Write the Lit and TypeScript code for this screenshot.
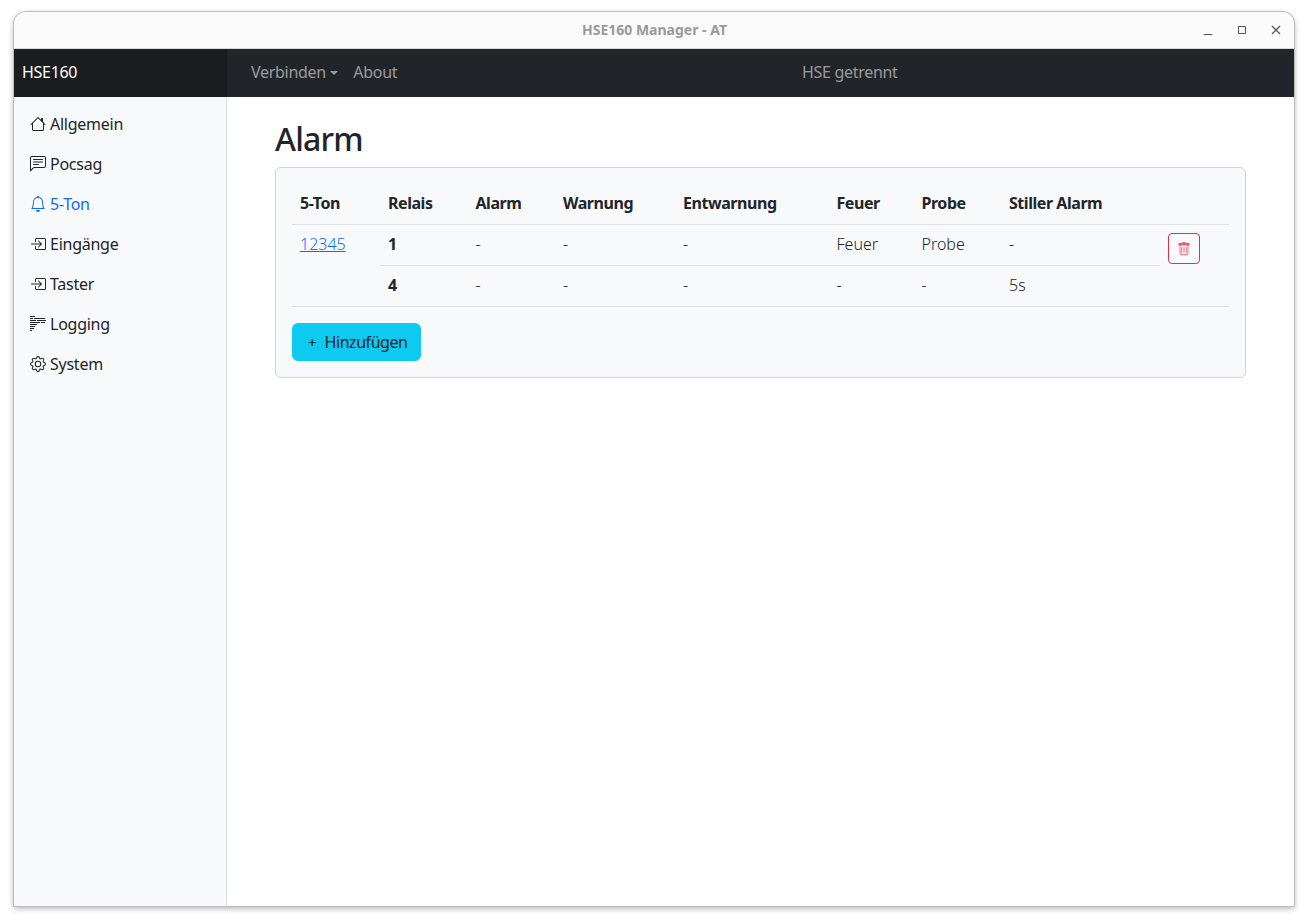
import { LitElement, css, html, svg } from "lit";
import { customElement } from "lit/decorators.js";

const icons = {
  house: svg`<path d="M8.707 1.5a1 1 0 0 0-1.414 0L.646 8.146a.5.5 0 0 0 .708.708L2 8.207V13.5A1.5 1.5 0 0 0 3.5 15h9a1.5 1.5 0 0 0 1.5-1.5V8.207l.646.647a.5.5 0 0 0 .708-.708L13 5.793V2.5a.5.5 0 0 0-.5-.5h-1a.5.5 0 0 0-.5.5v1.293L8.707 1.5ZM13 7.207V13.5a.5.5 0 0 1-.5.5h-9a.5.5 0 0 1-.5-.5V7.207l5-5 5 5Z"/>`,
  chat: svg`<path d="M14 1a1 1 0 0 1 1 1v8a1 1 0 0 1-1 1H4.414A2 2 0 0 0 3 11.586l-2 2V2a1 1 0 0 1 1-1h12zM2 0a2 2 0 0 0-2 2v12.793a.5.5 0 0 0 .854.353l2.853-2.853A1 1 0 0 1 4.414 12H14a2 2 0 0 0 2-2V2a2 2 0 0 0-2-2H2z"/><path d="M3 3.5a.5.5 0 0 1 .5-.5h9a.5.5 0 0 1 0 1h-9a.5.5 0 0 1-.5-.5zM3 6a.5.5 0 0 1 .5-.5h9a.5.5 0 0 1 0 1h-9A.5.5 0 0 1 3 6zm0 2.5a.5.5 0 0 1 .5-.5h5a.5.5 0 0 1 0 1h-5a.5.5 0 0 1-.5-.5z"/>`,
  bell: svg`<path d="M8 16a2 2 0 0 0 2-2H6a2 2 0 0 0 2 2zM8 1.918l-.797.161A4.002 4.002 0 0 0 4 6c0 .628-.134 2.197-.459 3.742-.16.767-.376 1.566-.663 2.258h10.244c-.287-.692-.502-1.49-.663-2.258C12.134 8.197 12 6.628 12 6a4.002 4.002 0 0 0-3.203-3.92L8 1.917zM14.22 12c.223.447.481.801.78 1H1c.299-.199.557-.553.78-1C2.68 10.2 3 6.88 3 6c0-2.42 1.72-4.44 4.005-4.901a1 1 0 1 1 1.99 0A5.002 5.002 0 0 1 13 6c0 .88.32 4.2 1.22 6z"/>`,
  enter: svg`<path d="M6 3.5a.5.5 0 0 1 .5-.5h8a.5.5 0 0 1 .5.5v9a.5.5 0 0 1-.5.5h-8a.5.5 0 0 1-.5-.5v-2a.5.5 0 0 0-1 0v2A1.5 1.5 0 0 0 6.5 14h8a1.5 1.5 0 0 0 1.5-1.5v-9A1.5 1.5 0 0 0 14.5 2h-8A1.5 1.5 0 0 0 5 3.5v2a.5.5 0 0 0 1 0v-2z"/><path d="M11.854 8.354a.5.5 0 0 0 0-.708l-3-3a.5.5 0 1 0-.708.708L10.293 7.5H1.5a.5.5 0 0 0 0 1h8.793l-2.147 2.146a.5.5 0 0 0 .708.708l3-3z"/>`,
  log: svg`<path d="M0 0h5v1H0zM0 2h3v1H0zM4 2h11v1H4zM0 4h6v1H0zM7 4h9v1H7zM0 6h10v1H0zM11 6h4v1h-4zM0 8h7v1H0zM0 10h5v1H0zM0 12h4v1H0zM0 14h2v1H0z"/>`,
  gear: svg`<path d="M8 4.754a3.246 3.246 0 1 0 0 6.492 3.246 3.246 0 0 0 0-6.492zM5.754 8a2.246 2.246 0 1 1 4.492 0 2.246 2.246 0 0 1-4.492 0z"/><path d="M9.796 1.343c-.527-1.79-3.065-1.79-3.592 0l-.094.319a.873.873 0 0 1-1.255.52l-.292-.16c-1.64-.892-3.433.902-2.54 2.541l.159.292a.873.873 0 0 1-.52 1.255l-.319.094c-1.79.527-1.79 3.065 0 3.592l.319.094a.873.873 0 0 1 .52 1.255l-.16.292c-.892 1.64.901 3.434 2.541 2.54l.292-.159a.873.873 0 0 1 1.255.52l.094.319c.527 1.79 3.065 1.79 3.592 0l.094-.319a.873.873 0 0 1 1.255-.52l.292.16c1.64.893 3.434-.902 2.54-2.541l-.159-.292a.873.873 0 0 1 .52-1.255l.319-.094c1.79-.527 1.79-3.065 0-3.592l-.319-.094a.873.873 0 0 1-.52-1.255l.16-.292c.893-1.64-.902-3.433-2.541-2.54l-.292.159a.873.873 0 0 1-1.255-.52l-.094-.319zm-2.633.283c.246-.835 1.428-.835 1.674 0l.094.319a1.873 1.873 0 0 0 2.693 1.115l.291-.16c.764-.415 1.6.42 1.184 1.185l-.159.292a1.873 1.873 0 0 0 1.116 2.692l.318.094c.835.246.835 1.428 0 1.674l-.319.094a1.873 1.873 0 0 0-1.115 2.693l.16.291c.415.764-.42 1.6-1.185 1.184l-.291-.159a1.873 1.873 0 0 0-2.693 1.116l-.094.318c-.246.835-1.428.835-1.674 0l-.094-.319a1.873 1.873 0 0 0-2.692-1.115l-.292.16c-.764.415-1.6-.42-1.184-1.185l.159-.291A1.873 1.873 0 0 0 1.945 8.93l-.319-.094c-.835-.246-.835-1.428 0-1.674l.319-.094A1.873 1.873 0 0 0 3.06 4.377l-.16-.292c-.415-.764.42-1.6 1.185-1.184l.292.159a1.873 1.873 0 0 0 2.692-1.115l.094-.319z"/>`,
  trash: svg`<path d="M5.5 5.5A.5.5 0 0 1 6 6v6a.5.5 0 0 1-1 0V6a.5.5 0 0 1 .5-.5zm2.5 0a.5.5 0 0 1 .5.5v6a.5.5 0 0 1-1 0V6a.5.5 0 0 1 .5-.5zm3 .5a.5.5 0 0 0-1 0v6a.5.5 0 0 0 1 0V6z"/><path d="M14.5 3a1 1 0 0 1-1 1H13v9a2 2 0 0 1-2 2H5a2 2 0 0 1-2-2V4h-.5a1 1 0 0 1-1-1V2a1 1 0 0 1 1-1H6a1 1 0 0 1 1-1h2a1 1 0 0 1 1 1h3.5a1 1 0 0 1 1 1v1zM4.118 4 4 4.059V13a1 1 0 0 0 1 1h6a1 1 0 0 0 1-1V4.059L11.882 4H4.118zM2.5 3V2h11v1h-11z"/>`,
};

const nav = [
  { label: "Allgemein", icon: icons.house },
  { label: "Pocsag", icon: icons.chat },
  { label: "5-Ton", icon: icons.bell, active: true },
  { label: "Eingänge", icon: icons.enter },
  { label: "Taster", icon: icons.enter },
  { label: "Logging", icon: icons.log },
  { label: "System", icon: icons.gear },
];

const heads = ["Relais", "Alarm", "Warnung", "Entwarnung", "Feuer", "Probe", "Stiller Alarm"];
const rows = [
  ["1", "-", "-", "-", "Feuer", "Probe", "-"],
  ["4", "-", "-", "-", "-", "-", "5s"],
];

const icon = (body: unknown) =>
  html`<svg class="bi" viewBox="0 0 16 16" fill="currentColor">${body}</svg>`;

@customElement("app-root")
export class AppRoot extends LitElement {
  render() {
    return html`
      <div class="window">
        <header class="titlebar">
          <span class="title">HSE160 Manager - AT</span>
          <div class="controls">
            <svg width="10" height="10" viewBox="0 0 10 10"><path d="M1 9.5h8" stroke="#555" /></svg>
            <svg width="10" height="10" viewBox="0 0 10 10"><path d="M1.5 1.5h7v7h-7z" fill="none" stroke="#555" /></svg>
            <svg width="10" height="10" viewBox="0 0 10 10"><path d="M1 1l8 8M9 1l-8 8" stroke="#555" stroke-width="1.2" /></svg>
          </div>
        </header>
        <nav class="navbar">
          <a class="brand">HSE160</a>
          <div class="menu">
            <a class="dropdown">Verbinden</a>
            <a>About</a>
          </div>
          <span class="status">HSE getrennt</span>
        </nav>
        <div class="body">
          <aside class="sidebar">
            ${nav.map(
              (n) => html`<a class="item ${n.active ? "active" : ""}">${icon(n.icon)}<span>${n.label}</span></a>`
            )}
          </aside>
          <main class="main">
            <h2>Alarm</h2>
            <section class="card">
              <table>
                <colgroup>
                  <col class="c88" /><col class="c87" /><col class="c87" />
                  <col class="c120" /><col class="c153" /><col class="c85" />
                  <col class="c87" /><col class="c159" /><col class="c69" />
                </colgroup>
                <thead>
                  <tr>
                    <th>5-Ton</th>
                    ${heads.map((h) => html`<th>${h}</th>`)}
                    <th></th>
                  </tr>
                </thead>
                <tbody>
                  ${rows.map(
                    (r, i) => html`<tr>
                      ${i === 0 ? html`<td rowspan="2" class="top"><a class="link">12345</a></td>` : ""}
                      ${r.map((c, j) => html`<td class=${j === 0 ? "strong" : ""}>${c}</td>`)}
                      ${i === 0
                        ? html`<td rowspan="2" class="top">
                            <button class="del" aria-label="Löschen">${icon(icons.trash)}</button>
                          </td>`
                        : ""}
                    </tr>`
                  )}
                </tbody>
              </table>
              <button class="add"><span class="plus">+</span>Hinzufügen</button>
            </section>
          </main>
        </div>
      </div>
    `;
  }

  static styles = css`
    :host {
      display: block;
      height: 923px;
      background: #fff;
      padding: 12px 14px 0;
      box-sizing: border-box;
      font-family: "Noto Sans", "Open Sans", sans-serif;
      font-size: 16px;
      color: #212529;
    }

    .window {
      width: 1280px;
      height: 894px;
      display: flex;
      flex-direction: column;
      background: #fff;
      border-radius: 12px 12px 0 0;
      overflow: hidden;
      box-shadow:
        0 0 0 1px #bdbdbd,
        0 2px 6px rgba(0, 0, 0, 0.35);
    }

    .titlebar {
      height: 36px;
      flex: none;
      background: #fafafa;
      border-bottom: 1px solid #d8d8d8;
      display: flex;
      align-items: center;
      justify-content: center;
      position: relative;
    }

    .title {
      font-size: 14px;
      font-weight: 700;
      line-height: 20px;
      color: #9a9a9a;
      margin-left: 1px;
    }

    .controls {
      position: absolute;
      right: 13px;
      top: 13px;
      display: flex;
      gap: 24px;
    }

    .controls svg {
      display: block;
    }

    .navbar {
      height: 48px;
      flex: none;
      display: flex;
      align-items: center;
      background: #212529;
      color: rgba(255, 255, 255, 0.55);
      letter-spacing: -0.3px;
      position: relative;
    }

    .brand {
      width: 213px;
      height: 100%;
      box-sizing: border-box;
      padding: 0 0 2px 8px;
      display: flex;
      align-items: center;
      background: #1a1d20;
      color: #fff;
    }

    .menu {
      display: flex;
      gap: 15.5px;
      padding: 0 0 2px 24px;
    }

    .dropdown::after {
      content: "";
      display: inline-block;
      margin-left: 4px;
      vertical-align: 3px;
      border-top: 4.8px solid;
      border-left: 4.8px solid transparent;
      border-right: 4.8px solid transparent;
    }

    .status {
      position: absolute;
      left: 788px;
      top: 12px;
    }

    .body {
      flex: 1;
      display: flex;
      min-height: 0;
    }

    .sidebar {
      width: 213px;
      flex: none;
      box-sizing: border-box;
      background: #f8f9fa;
      border-right: 1px solid #dee2e6;
      padding-top: 7px;
      display: flex;
      flex-direction: column;
      letter-spacing: -0.25px;
    }

    .item {
      height: 40px;
      display: flex;
      align-items: center;
      gap: 4px;
      padding-left: 16px;
      color: #212529;
    }

    .item.active {
      color: #0d6efd;
    }

    .bi {
      width: 16px;
      height: 16px;
      display: block;
      flex: none;
    }

    .main {
      flex: 1;
      padding: 23px 48px 0;
    }

    h2 {
      margin: 0 0 9px;
      font-size: 32px;
      font-weight: 500;
      line-height: 38px;
      letter-spacing: -0.8px;
    }

    .card {
      width: 971px;
      box-sizing: border-box;
      height: 211px;
      background: #f8f9fa;
      border: 1px solid #ced4da;
      border-radius: 6px;
      padding: 16px;
    }

    table {
      width: 937px;
      border-collapse: collapse;
      table-layout: fixed;
    }

    .c88 {
      width: 88px;
    }
    .c87 {
      width: 87.5px;
    }
    .c120 {
      width: 120px;
    }
    .c153 {
      width: 153.5px;
    }
    .c85 {
      width: 85px;
    }
    .c159 {
      width: 159px;
    }
    .c69 {
      width: 69px;
    }

    th,
    td {
      padding: 7px 8px 9px;
      text-align: left;
      height: 24px;
      line-height: 24px;
      border-bottom: 1px solid #dee2e6;
      font-weight: 300;
    }

    th {
      font-weight: 700;
      letter-spacing: -0.45px;
    }

    td.strong {
      font-weight: 700;
    }

    td.top {
      vertical-align: top;
    }

    .link {
      color: #0d6efd;
      text-decoration: underline;
    }

    .del {
      margin-top: 1px;
      width: 32px;
      height: 31px;
      padding: 0;
      display: flex;
      align-items: center;
      justify-content: center;
      background: transparent;
      border: 1px solid #dc3545;
      border-radius: 4px;
      color: #e4606d;
    }

    .del .bi {
      width: 14px;
      height: 14px;
    }

    .add {
      margin-top: 16px;
      height: 38px;
      padding: 0 12px 0 13px;
      display: flex;
      align-items: center;
      background: #0dcaf0;
      border: 1px solid #0dcaf0;
      border-radius: 6px;
      color: #212529;
      font: inherit;
      letter-spacing: -0.45px;
    }

    .plus {
      margin: 0 8px 0 2px;
      font-size: 15px;
      letter-spacing: 0;
    }
  `;
}
